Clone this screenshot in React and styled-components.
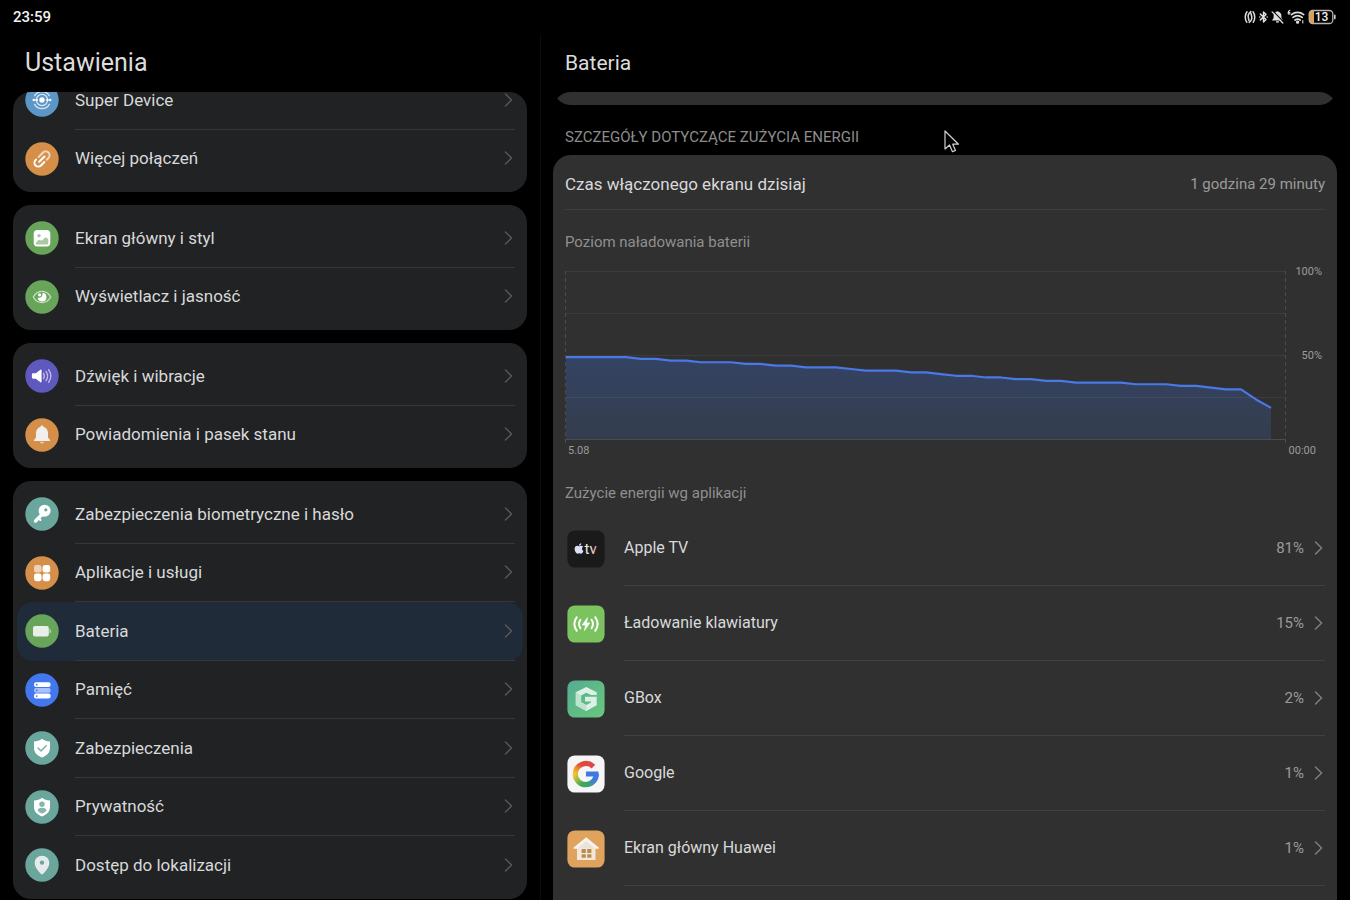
import React from "react";
import styled, { createGlobalStyle, css } from "styled-components";
import { FaApple } from "react-icons/fa";

const GlobalStyle = createGlobalStyle`
  * {
    box-sizing: border-box;
  }

  body {
    margin: 0;
    background: #000;
    color: #d8d9da;
    font-family: Roboto, "Noto Sans", sans-serif;
    font-size: 17px;
    line-height: 24px;
  }
`;

const Page = styled.div`
  position: relative;
  display: flex;
  flex-direction: column;
  height: 100vh;
  overflow: hidden;
`;

const StatusBar = styled.header`
  display: flex;
  flex: none;
  justify-content: space-between;
  align-items: center;
  height: 34px;
  padding: 0 14px 0 13px;
`;

const Clock = styled.time`
  color: #f2f2f2;
  font-size: 15px;
  font-weight: 500;
`;

const StatusIcons = styled.div`
  display: flex;
  align-items: center;
  gap: 3px;
`;

const Columns = styled.div`
  display: grid;
  flex: 1;
  grid-template-columns: 2fr 3fr;
  min-height: 0;
`;

const Pane = styled.section`
  display: flex;
  flex-direction: column;
  min-height: 0;
  padding: 0 13px;
  ${(props) =>
    props.$divided &&
    css`
      padding-left: 12px;
      border-left: 1px solid #0c0c0d;
    `};
`;

const Title = styled.h1`
  flex: none;
  height: 58px;
  margin: 0;
  padding: 0 12px;
  color: #dcdcdc;
  font-size: ${(props) => props.$size};
  font-weight: 400;
  line-height: 58px;
`;

const Scroller = styled.div`
  flex: 1;
  min-height: 0;
  border-radius: 18px 18px 0 0;
  overflow: hidden;
`;

const Groups = styled.nav`
  display: flex;
  flex-direction: column;
  gap: 13px;
  margin-top: -25px;
`;

const Group = styled.div`
  padding: 4px;
  border-radius: 18px;
  background: #202224;
`;

const RowBody = styled.span`
  display: flex;
  flex: 1;
  align-items: center;
  justify-content: space-between;
  align-self: stretch;
  border-bottom: 1px solid ${(props) => props.$line || "transparent"};
  line-height: 16px;
`;

const SettingLink = styled.a`
  display: flex;
  align-items: center;
  gap: 16px;
  height: 6.5vh;
  min-height: 44px;
  padding: 0 8px;
  border-radius: 16px;
  color: inherit;
  text-decoration: none;
  ${(props) =>
    props.$active &&
    css`
      background: #202b39;
    `};
`;

const HiddenCard = styled.div`
  height: 40px;
  margin-top: -27px;
  border-radius: 18px;
  background: #303030;
`;

const SectionLabel = styled.h2`
  margin: 20px 0 6px;
  padding: 0 12px;
  color: #8d8d8d;
  font-size: 15px;
  font-weight: 400;
  text-transform: uppercase;
`;

const Card = styled.div`
  min-height: 100%;
  padding: 0 12px;
  border-radius: 18px;
  background: #303030;
`;

const ScreenTime = styled.div`
  display: flex;
  align-items: center;
  justify-content: space-between;
  height: 55px;
  padding-top: 4px;
  border-bottom: 1px solid #3d3d3d;
`;

const ScreenTimeValue = styled.span`
  color: #9b9b9b;
  font-size: 15px;
`;

const Caption = styled.h3`
  margin: 0;
  padding: ${(props) => props.$pad};
  color: #8f8f8f;
  font-size: 15px;
  font-weight: 400;
`;

const Chart = styled.figure`
  display: grid;
  grid-template-columns: 1fr 39px;
  margin: 0;
`;

const Plot = styled.svg`
  display: block;
  width: 100%;
  height: 174px;
`;

const Scale = styled.div`
  display: flex;
  flex-direction: column;
  gap: 68px;
  margin-top: -7px;
  padding-right: 3px;
  color: #9b9b9b;
  font-size: 11px;
  line-height: 16px;
  text-align: right;
`;

const Hours = styled.div`
  display: flex;
  grid-column: 1 / 3;
  justify-content: space-between;
  padding: 0 9px 0 3px;
  color: #9b9b9b;
  font-size: 11px;
  line-height: 12px;
`;

const AppButton = styled.button`
  display: flex;
  align-items: center;
  gap: 19px;
  width: 100%;
  height: 75px;
  padding: 0 0 0 2px;
  border: 0;
  background: none;
  color: inherit;
  font: inherit;
  font-size: 16px;
  text-align: left;
`;

const Usage = styled.span`
  display: flex;
  align-items: center;
  gap: 9px;
  color: #9b9b9b;
  font-size: 15px;
`;

const Cursor = styled.svg`
  position: absolute;
  top: 129px;
  left: 943px;
`;

const Chevron = ({ color = "#57595b" }) => (
  <svg width="12" height="16" viewBox="0 0 12 16" fill="none" aria-hidden="true">
    <path d="M2.5 2 8.6 8 2.5 14" stroke={color} strokeWidth="1.4" strokeLinecap="round" strokeLinejoin="round" />
  </svg>
);

const Disc = ({ color, children }) => (
  <svg width="34" height="34" viewBox="0 0 34 34" fill="none" aria-hidden="true">
    <circle cx="17" cy="17" r="16.7" fill={color} />
    {children}
  </svg>
);

const shield = "M17 7.8C19.3 9.6 22 10.4 25 10.6V17c0 4.4-3 7.6-8 9.6-5-2-8-5.2-8-9.6V10.6C12 10.4 14.7 9.6 17 7.8Z";

const icons = {
  device: (
    <Disc color="#5b96c6">
      <circle cx="17" cy="17" r="2.7" fill="#fff" />
      <circle cx="17" cy="17" r="5.6" stroke="#fff" strokeOpacity=".8" strokeWidth="1.2" />
      <path d="M9.600 12.700a8.600 8.600 0 0 1 14.800 0M9.600 21.300a8.600 8.600 0 0 0 14.800 0" stroke="#fff" strokeOpacity=".75" strokeWidth="1.3" strokeLinecap="round" />
      <circle cx="8.8" cy="17" r="1.3" fill="#fff" />
      <circle cx="25.2" cy="17" r="1.3" fill="#fff" />
      <circle cx="22.4" cy="17" r="1.3" fill="#fff" />
      <circle cx="11.6" cy="17" r="1.3" fill="#fff" />
    </Disc>
  ),
  link: (
    <Disc color="#d58f49">
      <g transform="rotate(-45 17 17)" strokeWidth="2" strokeLinecap="round">
        <path d="M16 13.200h6.300a3.800 3.800 0 0 1 0 7.600h-2.500" stroke="#fff" strokeOpacity=".65" />
        <path d="M16.500 20.800h-4.800a3.800 3.800 0 0 1 0-7.600h.8M13 17h7.500" stroke="#fff" />
      </g>
    </Disc>
  ),
  image: (
    <Disc color="#68a55b">
      <rect x="8.7" y="9" width="16.6" height="16.4" rx="3.6" fill="#fff" />
      <circle cx="14" cy="14.7" r="1.7" fill="#a9caa3" />
      <path d="M10.800 22.400c1.200-3 3-4 4.800-3.200 1.400.6 2.200 0 3.200-1.400 1.600-2 3.300-1.500 4.500.8v3.300c0 .9-.6 1.500-1.500 1.500h-9.600c-.8 0-1.400-.4-1.400-1Z" fill="#a9caa3" />
    </Disc>
  ),
  eye: (
    <Disc color="#68a55b">
      <path d="M8.300 17c2.200-3.800 5.200-5.600 8.700-5.600s6.500 1.800 8.700 5.600c-2.200 3.800-5.200 5.600-8.700 5.600S10.500 20.800 8.300 17Z" stroke="#c6dec2" strokeWidth="1.4" strokeLinejoin="round" />
      <path d="M17.500 12.700a4.400 4.400 0 1 1-4.800 4.800c2.400 1.200 5.400-1.200 4.800-4.800Z" fill="#fff" />
      <circle cx="14.600" cy="14.800" r="1.600" fill="#fff" />
    </Disc>
  ),
  sound: (
    <Disc color="#5f58bd">
      <path d="M8.200 14.300h2.600l4.600-3.500c.6-.4 1.200-.1 1.200.6v11.200c0 .7-.6 1-1.200.6l-4.600-3.500H8.200c-.8 0-1.300-.5-1.300-1.200v-3c0-.7.5-1.200 1.300-1.200Z" fill="#fff" />
      <path d="M18.500 14.300c1 1.600 1 3.800 0 5.400M21 12.300c1.900 2.800 1.900 6.600 0 9.400M23.600 10.600c2.700 3.900 2.700 8.900 0 12.800" stroke="#fff" strokeOpacity=".62" strokeWidth="1.3" strokeLinecap="round" />
    </Disc>
  ),
  bell: (
    <Disc color="#d58f49">
      <path d="M17 7.600c.9 0 1.500.6 1.600 1.400 2.800.8 4.400 3.100 4.400 6v4.400l2 2.500c.4.600.1 1.100-.6 1.100H9.600c-.7 0-1-.5-.6-1.100l2-2.500V15c0-2.900 1.600-5.200 4.400-6 .1-.8.7-1.400 1.600-1.400Z" fill="#f0efed" />
      <path d="M14.800 23.700h4.400c-.3 1.200-1.100 1.900-2.200 1.900s-1.900-.7-2.200-1.900Z" fill="#ecc9a4" />
    </Disc>
  ),
  key: (
    <Disc color="#6aa69c">
      <path d="m17.500 17-7 7" stroke="#fff" strokeWidth="3.4" strokeLinecap="round" />
      <path d="m13.400 21.400 2 1.400" stroke="#fff" strokeWidth="2.2" strokeLinecap="round" />
      <circle cx="19.6" cy="13.7" r="6" fill="#fff" />
      <circle cx="20.800" cy="12.800" r="1.6" fill="#6aa69c" />
    </Disc>
  ),
  apps: (
    <Disc color="#d58f49">
      <rect x="9" y="9" width="7.6" height="7.6" rx="2.4" fill="#fff" fillOpacity=".6" />
      <rect x="17.6" y="9" width="7.6" height="7.6" rx="2.4" fill="#fff" />
      <rect x="9" y="17.6" width="7.6" height="7.6" rx="2.4" fill="#fff" />
      <rect x="17.6" y="17.6" width="7.6" height="7.6" rx="2.4" fill="#fff" />
    </Disc>
  ),
  battery: (
    <Disc color="#68a55b">
      <rect x="8" y="12" width="15.8" height="10.4" rx="2" fill="#e9efe8" />
      <path d="M24.700 15.300c1.400.2 1.400 3.600 0 3.800Z" fill="#b9d3b5" stroke="#b9d3b5" strokeWidth=".6" />
    </Disc>
  ),
  storage: (
    <Disc color="#4377ee">
      <rect x="9" y="9.2" width="16.6" height="4.9" rx="2" fill="#fff" />
      <rect x="9" y="14.9" width="16.6" height="4.9" rx="2" fill="#a9c0f8" />
      <rect x="9" y="20.6" width="16.6" height="4.9" rx="2" fill="#fff" />
      <path d="M11.700 11.650h.1M11.700 17.350h.1M11.700 23.050h.1" stroke="#4377ee" strokeWidth="1.7" strokeLinecap="round" />
    </Disc>
  ),
  shield: (
    <Disc color="#6aa69c">
      <path d={shield} fill="#fff" />
      <path d="m13 17 3 2.900 5.200-5.200" stroke="#86b7ae" strokeWidth="1.6" strokeLinecap="round" strokeLinejoin="round" />
    </Disc>
  ),
  privacy: (
    <Disc color="#6aa69c">
      <path d={shield} fill="#fff" />
      <circle cx="17" cy="14.3" r="2.7" fill="#86b7ae" />
      <path d="M12.600 20.400c0-1.800 1.800-2.700 4.400-2.700s4.400.9 4.400 2.700c-1 1.500-2.500 2.500-4.400 3.200-1.900-.7-3.400-1.700-4.400-3.200Z" fill="#86b7ae" />
    </Disc>
  ),
  pin: (
    <Disc color="#6aa69c">
      <path d="M17 7.800c4.200 0 7.300 3.100 7.300 7.200 0 3.500-2.600 7.400-6.300 11-.6.6-1.400.6-2 0-3.700-3.600-6.300-7.500-6.300-11 0-4.100 3.100-7.200 7.300-7.200Z" fill="#e5ebea" />
      <circle cx="17" cy="14.6" r="2.2" fill="#6aa69c" />
    </Disc>
  ),
};

const AppTile = ({ fill, children }) => (
  <svg width="38" height="38" viewBox="0 0 38 38" fill="none" aria-hidden="true">
    <rect x=".4" y=".4" width="37.2" height="37.2" rx="7.5" fill={fill} />
    {children}
  </svg>
);

const appIcons = {
  tv: (
    <AppTile fill="#1a1a1b">
      <defs>
        <linearGradient id="tvText" x1="17" y1="0" x2="31" y2="0" gradientUnits="userSpaceOnUse">
          <stop stopColor="#e3f1e6" />
          <stop offset=".5" stopColor="#f1ecdc" />
          <stop offset="1" stopColor="#d98c95" />
        </linearGradient>
      </defs>
      <FaApple x="6" y="12.5" size={12} color="#dcdff5" />
      <text x="17.5" y="23.5" fill="url(#tvText)" fontSize="15" fontWeight="400">
        tv
      </text>
    </AppTile>
  ),
  keyboard: (
    <AppTile fill="#7ac35f">
      <path d="M20.500 12.600 15.200 20h3.300l-1 5.600 5.300-7.700h-3.300l1-5.300Z" fill="#fff" stroke="#fff" strokeWidth=".6" strokeLinejoin="round" />
      <path d="M13.400 14.800c-1.700 2.600-1.700 5.800 0 8.400M9.800 12.200c-3 4.200-3 9.400 0 13.600M24.600 14.800c1.700 2.600 1.700 5.800 0 8.400M28.200 12.200c3 4.200 3 9.400 0 13.600" stroke="#fff" strokeWidth="2" strokeLinecap="round" />
    </AppTile>
  ),
  gbox: (
    <AppTile fill="url(#gboxBack)">
      <defs>
        <linearGradient id="gboxBack" x1="0" y1="0" x2="1" y2="1">
          <stop stopColor="#54ac92" />
          <stop offset="1" stopColor="#69c87d" />
        </linearGradient>
      </defs>
      <path d="M29.700 12.300 19.300 7 8.800 12.300v13l10.500 5.600 10.400-5.600v-8.500H18v4.600h6v1l-4.700 2.500-5.200-2.700v-6.700l5.200-2.700 4.700 2.300 5.700-.2Z" fill="#dcf0e4" />
      <path d="M8.800 12.300v13l10.500 5.600v-6l-5.200-2.700v-6.700Z" fill="#bfe3cf" />
    </AppTile>
  ),
  google: (
    <AppTile fill="#f6f6f6">
      <defs>
        <linearGradient id="gWarm" x1="16" y1="8" x2="8" y2="19" gradientUnits="userSpaceOnUse">
          <stop offset=".2" stopColor="#e0493f" />
          <stop offset=".65" stopColor="#ec9a2e" />
          <stop offset="1" stopColor="#f0c530" />
        </linearGradient>
        <linearGradient id="gCool" x1="8" y1="19" x2="18" y2="29" gradientUnits="userSpaceOnUse">
          <stop stopColor="#f0c530" />
          <stop offset=".45" stopColor="#8fbb45" />
          <stop offset=".85" stopColor="#3fa65a" />
        </linearGradient>
        <linearGradient id="gDeep" x1="17" y1="30" x2="29" y2="21" gradientUnits="userSpaceOnUse">
          <stop offset=".1" stopColor="#3fa65a" />
          <stop offset=".55" stopColor="#3b8fb0" />
          <stop offset=".8" stopColor="#3f79e0" />
        </linearGradient>
      </defs>
      <g strokeWidth="5.2">
        <path d="M26.400 11.600A10.700 10.700 0 0 0 8.300 19.200" stroke="url(#gWarm)" />
        <path d="M8.300 19A10.700 10.700 0 0 0 19 29.700" stroke="url(#gCool)" />
        <path d="M18.800 29.700A10.700 10.700 0 0 0 29.300 18.700" stroke="url(#gDeep)" />
        <path d="M19 19h12.500" stroke="#3f79e0" strokeWidth="5" />
      </g>
    </AppTile>
  ),
  home: (
    <AppTile fill="#dfa35e">
      <path d="M10 18h18.500v12H10Z" fill="#f1e8dc" />
      <path d="m19.200 7.300 12.500 10.300c.5.500.3 1.200-.5 1.200H7.200c-.8 0-1-.7-.5-1.200Z" fill="#f7f3ee" />
      <path d="m19.200 11 9.300 7.800H10Z" fill="#ece3d7" />
      <path d="M14.600 19h4.200v4h-4.200Zm5.600 0h4.200v4h-4.200Zm-5.600 5.200h4.200v3.600h-4.200Zm5.600 0h4.200v3.600h-4.200Z" fill="#bd894e" />
    </AppTile>
  ),
};

const groups = [
  [
    { icon: "device", label: "Super Device" },
    { icon: "link", label: "Więcej połączeń" },
  ],
  [
    { icon: "image", label: "Ekran główny i styl" },
    { icon: "eye", label: "Wyświetlacz i jasność" },
  ],
  [
    { icon: "sound", label: "Dźwięk i wibracje" },
    { icon: "bell", label: "Powiadomienia i pasek stanu" },
  ],
  [
    { icon: "key", label: "Zabezpieczenia biometryczne i hasło" },
    { icon: "apps", label: "Aplikacje i usługi" },
    { icon: "battery", label: "Bateria", active: true },
    { icon: "storage", label: "Pamięć" },
    { icon: "shield", label: "Zabezpieczenia" },
    { icon: "privacy", label: "Prywatność" },
    { icon: "pin", label: "Dostęp do lokalizacji" },
  ],
];

const apps = [
  { icon: "tv", name: "Apple TV", usage: "81%" },
  { icon: "keyboard", name: "Ładowanie klawiatury", usage: "15%" },
  { icon: "gbox", name: "GBox", usage: "2%" },
  { icon: "google", name: "Google", usage: "1%" },
  { icon: "home", name: "Ekran główny Huawei", usage: "1%" },
];

// battery level, one value per half hour
const levels = [
  49, 49, 49, 49, 49, 48, 48, 47, 47, 46, 46, 46, 45, 45, 44, 44, 43, 43, 43, 42, 41, 41, 41, 40,
  40, 39, 38, 38, 37, 37, 36, 36, 35, 35, 34, 34, 34, 34, 33, 33, 33, 32, 32, 31, 30, 30, 24, 19,
];

const BatteryChart = () => {
  const line = levels.map((level, i) => `${i * 15 + 1},${169 - level * 1.69}`).join(" ");
  return (
    <Chart>
      <Plot viewBox="0 0 721 174" preserveAspectRatio="none" role="img" aria-label="Poziom naładowania baterii">
        <defs>
          <linearGradient id="level" x1="0" y1="0" x2="0" y2="1">
            <stop stopColor="#344364" />
            <stop offset="1" stopColor="#343d4d" />
          </linearGradient>
        </defs>
        <polygon points={`1,169 ${line} 706,169`} fill="url(#level)" />
        {[0, 42, 84, 126].map((y) => (
          <path key={y} d={`M0 ${y + 0.5}H721`} stroke="#fff" strokeOpacity=".06" />
        ))}
        <path d="M0 168.500H721" stroke="#4a4b4d" />
        <path d="M.5 0V174M720.500 0V174" stroke="#4b4b4b" strokeDasharray="4 3" />
        <polyline points={line} fill="none" stroke="#4a78e6" strokeWidth="2.2" strokeLinejoin="round" />
      </Plot>
      <Scale>
        <span>100%</span>
        <span>50%</span>
      </Scale>
      <Hours>
        <span>5.08</span>
        <span>00:00</span>
      </Hours>
    </Chart>
  );
};

const Status = () => (
  <StatusIcons>
    <svg width="12" height="16" viewBox="0 0 12 16" fill="none" stroke="#dedede" strokeWidth="1.5" strokeLinecap="round">
      <path d="M3 2.800C.7 5.600.7 10.400 2.800 13.200M9 2.800c2.300 2.800 2.300 7.600.2 10.400M6.800 2.600C4.300 4.500 3.800 6 4.300 8.500L5 11.500M5.200 13.400C7.700 11.500 8.200 10 7.700 7.500L7 4.500" />
    </svg>
    <svg width="9" height="16" viewBox="0 0 10 16" fill="none" stroke="#dedede" strokeWidth="1.6" strokeLinejoin="round" strokeLinecap="round">
      <path d="m1.500 4.800 6.300 6L5 13.600V2.400l2.800 2.800-6.300 6M.8 8h.1M9 8h.1" />
    </svg>
    <svg width="13" height="16" viewBox="0 0 14 16" fill="none">
      <path d="M7 1.800c2.800.6 4.200 2.500 4.200 4.900v2.500l1.800 2.600H1l1.800-2.600V6.700C2.800 4.300 4.200 2.400 7 1.800ZM5.200 12.600h3.600c-.3 1.200-1 1.600-1.800 1.600s-1.500-.4-1.800-1.600Z" fill="#dedede" />
      <path d="m2.200 1.600 11.500 12" stroke="#000" strokeWidth="1.3" />
      <path d="m1.200 2.500 11.500 12" stroke="#dedede" strokeWidth="1.4" strokeLinecap="round" />
    </svg>
    <svg width="18" height="16" viewBox="0 0 18 16" fill="none" stroke="#dedede" strokeWidth="1.7" strokeLinecap="round">
      <path d="M4.500 5.600C8 2.700 13 2.700 16.700 5.600M6 8.400c2.700-2.200 6.400-2.200 9.200 0M8 11c1.600-1.200 3.600-1.200 5.200 0" />
      <circle cx="10.6" cy="13.2" r=".8" fill="#dedede" />
      <path d="M2.900 1.300C.8 2.300.7 5.200 2 5.200s1.300-1.800.1-1.800M15.800 11.500v2.500" strokeWidth="1.100" />
    </svg>
    <svg width="28" height="16" viewBox="0 0 28 16" fill="none">
      <path d="M6 1.500H4.500A3.300 3.300 0 0 0 1.200 4.800v6.400a3.300 3.300 0 0 0 3.300 3.300H6Z" fill="#dfa052" />
      <rect x="1.2" y="1.5" width="23.6" height="13" rx="3.5" stroke="#b9b3aa" strokeWidth="1.3" />
      <path d="M26.800 6.400v3.200" stroke="#cfcfcf" strokeWidth="1.6" strokeLinecap="round" />
      <text x="13.5" y="12.2" fill="#f2f2f2" fontSize="12" fontWeight="500" textAnchor="middle">
        13
      </text>
    </svg>
  </StatusIcons>
);

const SettingRow = ({ item, last }) => (
  <SettingLink href={`#${item.icon}`} $active={item.active} aria-current={item.active ? "page" : undefined}>
    {icons[item.icon]}
    <RowBody $line={last ? undefined : "#35383a"}>
      {item.label}
      <Chevron />
    </RowBody>
  </SettingLink>
);

export default function App() {
  return (
    <Page>
      <GlobalStyle />
      <StatusBar>
        <Clock>23:59</Clock>
        <Status />
      </StatusBar>
      <Columns>
        <Pane>
          <Title $size="25px">Ustawienia</Title>
          <Scroller>
            <Groups>
              {groups.map((items) => (
                <Group key={items[0].icon}>
                  {items.map((item, i) => (
                    <SettingRow key={item.icon} item={item} last={i === items.length - 1} />
                  ))}
                </Group>
              ))}
            </Groups>
          </Scroller>
        </Pane>
        <Pane $divided>
          <Title $size="21px">Bateria</Title>
          <Scroller>
            <HiddenCard />
            <SectionLabel>Szczegóły dotyczące zużycia energii</SectionLabel>
            <Card>
              <ScreenTime>
                <span>Czas włączonego ekranu dzisiaj</span>
                <ScreenTimeValue>1 godzina 29 minuty</ScreenTimeValue>
              </ScreenTime>
              <Caption $pad="20px 0 17px">Poziom naładowania baterii</Caption>
              <BatteryChart />
              <Caption $pad="24px 0 6px">Zużycie energii wg aplikacji</Caption>
              {apps.map((app) => (
                <AppButton key={app.name} type="button">
                  {appIcons[app.icon]}
                  <RowBody $line="#414141">
                    {app.name}
                    <Usage>
                      {app.usage}
                      <Chevron color="#808080" />
                    </Usage>
                  </RowBody>
                </AppButton>
              ))}
            </Card>
          </Scroller>
        </Pane>
      </Columns>
      <Cursor width="18" height="26" viewBox="0 0 18 26" fill="none" aria-hidden="true">
        <path d="M2 2v18l4.500-4 3 6.700 3-1.300-2.800-6.200H15.500Z" fill="#000" stroke="#d0d0d0" strokeWidth="1.2" strokeLinejoin="round" />
      </Cursor>
    </Page>
  );
}
